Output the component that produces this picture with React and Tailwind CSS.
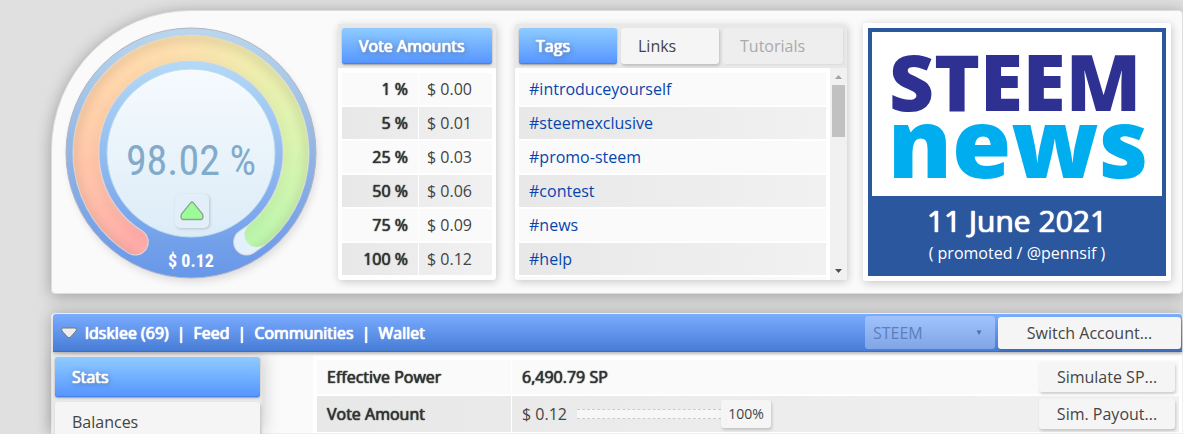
import { useState } from "react";

const votes = [
  ["1 %", "$ 0.00"],
  ["5 %", "$ 0.01"],
  ["25 %", "$ 0.03"],
  ["50 %", "$ 0.06"],
  ["75 %", "$ 0.09"],
  ["100 %", "$ 0.12"],
];

const tags = [
  "introduceyourself",
  "steemexclusive",
  "promo-steem",
  "contest",
  "news",
  "help",
];

// colour stops along the arc, from empty (red) to full (green)
const stops = [
  [255, 172, 168],
  [255, 192, 170],
  [255, 206, 170],
  [255, 216, 172],
  [252, 224, 174],
  [240, 236, 174],
  [224, 243, 176],
  [208, 245, 176],
  [188, 245, 172],
];

// angle in degrees, clockwise from the bottom
function point(deg, r = 105) {
  const a = (deg * Math.PI) / 180;
  return [126 - r * Math.sin(a), 126 + r * Math.cos(a)];
}

function arc(from, to) {
  const [x1, y1] = point(from);
  const [x2, y2] = point(to);
  return `M${x1} ${y1}A105 105 0 ${to - from > 180 ? 1 : 0} 1 ${x2} ${y2}`;
}

function colorAt(t) {
  const pos = t * (stops.length - 1);
  const i = Math.min(Math.floor(pos), stops.length - 2);
  const rgb = stops[i].map((c, k) =>
    Math.round(c + (stops[i + 1][k] - c) * (pos - i))
  );
  return `rgb(${rgb.join(",")})`;
}

const START = 32;
const END = 328;
const VALUE = 321;
const STEPS = 144;

function Gauge() {
  const step = (VALUE - START) / STEPS;
  return (
    <div className="relative w-[252px] shrink-0">
      <svg viewBox="0 0 252 252" className="block w-full overflow-visible">
        <defs>
          <linearGradient id="ring" x1="0" y1="0" x2="0" y2="1">
            <stop offset="0" stopColor="#b9d7ec" />
            <stop offset="0.5" stopColor="#92b5e2" />
            <stop offset="1" stopColor="#6797ea" />
          </linearGradient>
          <linearGradient id="innerRing" x1="0" y1="0" x2="0" y2="1">
            <stop offset="0" stopColor="#b4daf6" />
            <stop offset="1" stopColor="#729fea" />
          </linearGradient>
          <linearGradient id="face" x1="0" y1="0" x2="0" y2="1">
            <stop offset="0" stopColor="#f6fafe" />
            <stop offset="1" stopColor="#dcecf7" />
          </linearGradient>
          <filter id="soft" x="-20%" y="-20%" width="140%" height="140%">
            <feGaussianBlur stdDeviation="4" />
          </filter>
          <mask id="track">
            <path d={arc(START, VALUE)} fill="none" stroke="#fff" strokeWidth="25" strokeLinecap="round" />
          </mask>
        </defs>
        <circle cx="128" cy="131" r="124" fill="#000" opacity="0.12" filter="url(#soft)" />
        <circle cx="126" cy="126" r="125" fill="url(#ring)" stroke="#b3b3c8" />
        <circle cx="126" cy="126" r="93" fill="url(#innerRing)" />
        <path d={arc(START, END)} fill="none" stroke="#d5d3dc" strokeWidth="27" strokeLinecap="round" />
        <path d={arc(START, END)} fill="none" stroke="#e2f1fc" strokeWidth="25" strokeLinecap="round" />
        <g fill="none" strokeWidth="25">
          <path d={arc(START, START + 1)} stroke={colorAt(0)} strokeLinecap="round" />
          <path d={arc(VALUE - 1, VALUE)} stroke={colorAt(1)} strokeLinecap="round" />
          {Array.from({ length: STEPS }, (_, i) => (
            <path
              key={i}
              d={arc(START + i * step, Math.min(START + (i + 1) * step + 0.5, VALUE))}
              stroke={colorAt(i / STEPS)}
            />
          ))}
        </g>
        <g mask="url(#track)">
          <circle cx="126" cy="128" r="117" fill="none" stroke="#6b6040" strokeWidth="4" opacity="0.25" filter="url(#soft)" />
          <circle cx="126" cy="128" r="93" fill="none" stroke="#6b6040" strokeWidth="3" opacity="0.12" filter="url(#soft)" />
        </g>
        <circle cx="126" cy="126" r="84" fill="url(#face)" stroke="#b8dcf0" />
        <text
          x="126"
          y="148"
          textAnchor="middle"
          fill="#82abcb"
          className="font-['Roboto_Condensed','Liberation_Sans_Narrow',sans-serif] text-[42px]"
        >
          98.02 %
        </text>
        <text
          x="126"
          y="240"
          textAnchor="middle"
          fill="#fff"
          className="font-['Roboto_Condensed','Liberation_Sans_Narrow',sans-serif] text-[18px] font-bold"
        >
          $ 0.12
        </text>
      </svg>
      <button
        aria-label="Vote value up"
        className="absolute top-[167px] left-[110px] grid h-[34px] w-[34px] place-items-center rounded-[5px] bg-[#e3eff8] shadow-[1px_1px_3px_rgba(0,0,0,0.18)]"
      >
        <svg width="24" height="20" viewBox="0 0 24 20">
          <path
            d="M10.8 1.6Q12 .4 13.200 1.600L22.500 13Q24 18 21 18.500H3Q0 18 1.500 13Z"
            fill="#9dfb98"
            stroke="#86a592"
            strokeWidth="1.300"
          />
        </svg>
      </button>
    </div>
  );
}

// headings are regular-width letters thickened by a tight shadow
const strong = "[text-shadow:0_0_1px_currentColor,0_0_1px_currentColor]";
const activeTab =
  "rounded-[3px] bg-linear-to-b from-[#8fcbff] to-[#5694ff] text-white shadow-[0_1px_2px_rgba(0,0,0,0.35),inset_0_-1px_0_#4482ea] [text-shadow:0_0_1px_#fff,0_0_1px_#fff,0_0_1px_#fff,1px_1px_5px_rgba(60,60,60,0.7)]";
const plainButton =
  "rounded-[3px] bg-[#f5f5f5] text-[#444] shadow-[1px_2px_3px_rgba(0,0,0,0.18)]";

function VoteAmounts() {
  return (
    <div className="w-[158px] shrink-0 rounded-[3px] bg-white shadow-[1px_2px_8px_rgba(0,0,0,0.2)]">
      <div className="bg-[#e8e8e8] p-1">
        <h2 className={`h-9 px-[17px] leading-9 ${activeTab}`}>Vote Amounts</h2>
      </div>
      <div className="px-1 py-[5px]">
        <div className="-my-0.5">
          <table className="w-full border-separate border-spacing-x-0 border-spacing-y-0.5">
            <tbody>
              {votes.map(([percent, amount]) => (
                <tr key={percent} className="h-8 odd:bg-[#fafafa] even:bg-linear-to-r even:from-[#e8e8e8] even:to-[#f1f1f1]">
                  <th className={`w-[77px] border-r border-white pr-2.5 text-right font-normal text-[#333] ${strong}`}>
                    {percent}
                  </th>
                  <td className="pl-2">{amount}</td>
                </tr>
              ))}
            </tbody>
          </table>
        </div>
      </div>
    </div>
  );
}

function Tags() {
  return (
    <div className="flex w-[332px] shrink-0 flex-col overflow-hidden rounded-[3px] bg-white shadow-[1px_2px_8px_rgba(0,0,0,0.2)]">
      <div className="flex gap-1 bg-[#e8e8e8] p-1">
        <button className={`h-9 w-[98px] px-[17px] text-left ${activeTab}`}>Tags</button>
        <button className={`h-9 w-[98px] px-[17px] text-left ${plainButton}`}>Links</button>
        <button
          disabled
          className="h-9 flex-1 rounded-[3px] bg-[#eee] px-[17px] text-left text-[#aaa] shadow-[1px_1px_2px_rgba(0,0,0,0.06)]"
        >
          Tutorials
        </button>
      </div>
      <div className="flex h-[212px]">
        <ul className="flex flex-1 flex-col gap-0.5 overflow-hidden px-1 pt-[5px]">
          {tags.map((tag) => (
            <li
              key={tag}
              className="h-8 shrink-0 px-2.5 leading-8 odd:bg-[#fafafa] even:bg-linear-to-r even:from-[#e8e8e8] even:to-[#f1f1f1]"
            >
              <a href={`#${tag}`} className="text-[#0645ad]">
                #{tag}
              </a>
            </li>
          ))}
          <li className="h-8 shrink-0 bg-[#fafafa]" />
        </ul>
        <div className="flex w-[17px] flex-col items-center bg-[#f1f1f1]">
          <svg width="17" height="17" viewBox="0 0 17 17">
            <path d="M5 11L8.500 7L12 11Z" fill="#a3a3a3" />
          </svg>
          <div className="h-[52px] w-[13px] bg-[#c1c1c1]" />
          <svg width="17" height="17" viewBox="0 0 17 17" className="mt-auto">
            <path d="M5 6L8.500 10L12 6Z" fill="#505050" />
          </svg>
        </div>
      </div>
    </div>
  );
}

function NewsCard() {
  return (
    <a
      href="#news"
      className="-mt-px block h-[258px] w-[308px] shrink-0 rounded-[3px] bg-white p-[5px] shadow-[1px_2px_8px_rgba(0,0,0,0.2)]"
    >
      <div className="h-full bg-[#2b579f] p-1 text-center text-white">
        <svg viewBox="0 0 290 164" className="block w-full overflow-visible bg-white font-['Open_Sans',sans-serif]">
          <text x="143" y="79" textAnchor="middle" fill="#2e3192" className="text-[78px] font-extrabold">
            STEEM
          </text>
          <text x="146" y="146" textAnchor="middle" fill="#00aeef" className="text-[96px] font-extrabold">
            news
          </text>
        </svg>
        <p className="pt-1 text-[30px] leading-[42px] [text-shadow:0_0_1px_#fff,0_0_1px_#fff,0_0_1px_#fff]">
          11 June 2021
        </p>
        <p className="leading-[22px]">( promoted / @pennsif )</p>
      </div>
    </a>
  );
}

function AccountBar() {
  return (
    <div className="relative flex h-[38px] items-center rounded-t-[3px] border-b border-[#3f6fc4] bg-linear-to-b from-[#7aacff] to-[#487dd6] pr-px pl-2 shadow-[0_2px_3px_rgba(0,0,0,0.25)]">
      <svg width="16" height="12" viewBox="0 0 16 12">
        <path
          d="M1.500 1H14.500Q16 2 15 4L9.500 10Q8 11.500 6.500 10L1 4Q0 2 1.500 1Z"
          fill="#eee"
          stroke="#777"
        />
      </svg>
      <nav className="ml-2 flex gap-2 text-white [text-shadow:0_0_1px_#fff,0_0_1px_#fff,0_0_1px_#fff]">
        <a href="#account">ldsklee (69)</a>
        <span>|</span>
        <a href="#feed">Feed</a>
        <span>|</span>
        <a href="#communities">Communities</a>
        <span>|</span>
        <a href="#wallet">Wallet</a>
      </nav>
      <div className="relative ml-auto w-[130px]">
        <select
          disabled
          aria-label="Chain"
          className="block h-[33px] w-full appearance-none rounded-[3px] bg-white/30 px-2 text-[#5b7fba] opacity-100"
        >
          <option>STEEM</option>
        </select>
        <span className="pointer-events-none absolute top-2 right-3 text-[8px] leading-4 text-[#4a6fae]">
          ▼
        </span>
      </div>
      <button className={`ml-[3px] h-8 w-[183px] ${plainButton}`}>Switch Account...</button>
    </div>
  );
}

function App() {
  const [weight, setWeight] = useState(100);

  return (
    <div className="flex h-screen flex-col gap-[19px] overflow-hidden bg-[#e0e0e0] pt-2.5 pl-[51px] font-['Open_Sans',sans-serif] text-base text-[#444]">
      <header className="flex shrink-0 items-start rounded-[4px] rounded-tl-[140px] border border-[#ddd] bg-[#fafafa] pt-[13px] pb-3 pl-[13px] shadow-[0_2px_16px_rgba(0,0,0,0.3)]">
        <div className="pt-[3px]">
          <Gauge />
        </div>
        <div className="ml-[21px] flex gap-[19px]">
          <VoteAmounts />
          <Tags />
        </div>
        <div className="ml-4">
          <NewsCard />
        </div>
      </header>

      <main className="flex min-h-0 flex-1 flex-col rounded-t-[4px] border border-[#f0f0f0] bg-[#fafafa] pl-px shadow-[0_0_16px_rgba(0,0,0,0.25)]">
        <AccountBar />
        <div className="flex min-h-0 flex-1 pt-[3px]">
          <aside className="flex w-[209px] shrink-0 flex-col gap-[5px] bg-[#e8e8e8] px-0.5 pt-0.5 shadow-[2px_0_16px_rgba(0,0,0,0.18)]">
            <button className={`h-10 shrink-0 px-[17px] text-left ${activeTab}`}>Stats</button>
            <button className={`h-10 shrink-0 px-[17px] text-left ${plainButton}`}>Balances</button>
          </aside>
          <div className="ml-[51px] flex-1 bg-white pt-[3px] pr-[3px] pl-1">
            <table className="w-full border-separate border-spacing-x-0 border-spacing-y-0.5">
              <tbody>
                <tr className="h-[34px] bg-[#fafafa]">
                  <th className={`w-[195px] border-r border-white pl-2.5 text-left font-normal text-[#333] ${strong}`}>
                    Effective Power
                  </th>
                  <td className={`pl-2.5 text-[#333] ${strong}`}>6,490.79 SP</td>
                  <td className="w-[140px] pr-1">
                    <button className={`block h-[30px] w-[136px] ${plainButton}`}>Simulate SP...</button>
                  </td>
                </tr>
                <tr className="h-9 bg-linear-to-r from-[#e8e8e8] to-[#f1f1f1]">
                  <th className={`border-r border-white pl-2.5 text-left font-normal text-[#333] ${strong}`}>
                    <label htmlFor="weight">Vote Amount</label>
                  </th>
                  <td className="pl-2.5">
                    <div className="flex items-center">
                      <span>$ 0.12</span>
                      <input
                        id="weight"
                        type="range"
                        value={weight}
                        onChange={(e) => setWeight(e.target.value)}
                        className="ml-2.5 h-2.5 w-36 appearance-none border-y border-dashed border-[#ccc] bg-[#f7f7f7] [&::-webkit-slider-thumb]:appearance-none"
                      />
                      <output
                        htmlFor="weight"
                        className={`h-7 w-[50px] text-center text-sm leading-7 ${plainButton}`}
                      >
                        {weight}%
                      </output>
                    </div>
                  </td>
                  <td className="pr-1">
                    <button className={`block h-[30px] w-[136px] ${plainButton}`}>Sim. Payout...</button>
                  </td>
                </tr>
              </tbody>
            </table>
          </div>
        </div>
      </main>
    </div>
  );
}

export default App;
